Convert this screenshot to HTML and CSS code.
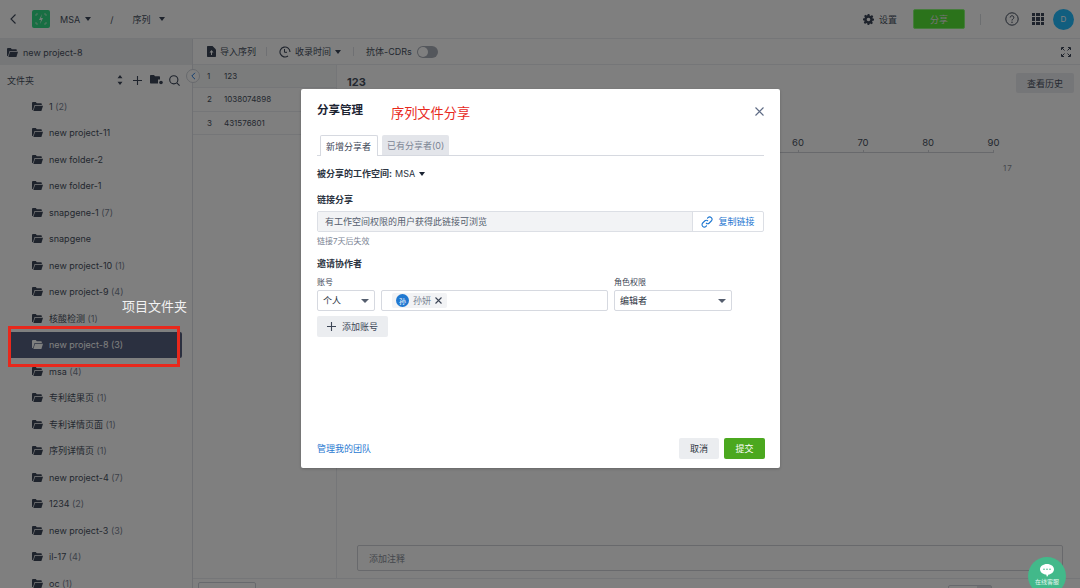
FILE: index.html
```html
<!DOCTYPE html>
<html>
<head>
    <title>序列文件分享</title>
    <link rel="stylesheet" href="styles.css">
</head>
<body>
    <svg class="defs" width="0" height="0">
        <symbol id="folder" viewBox="0 0 11 9">
            <path d="M0 1.2C0 .5.5 0 1.2 0h2.6l1 1.2h4c.6 0 1 .4 1 1V3H2.6L1 8.3 0 7.8z"/>
            <path d="M3 3.8h8L9.4 9H1.4z"/>
        </symbol>
    </svg>

    <header class="topbar">
        <svg class="back" width="6" height="10" viewBox="0 0 6 10"><path d="M5.500.5 1 5l4.500 4.500" fill="none" stroke="#3c4658" stroke-width="1.100"/></svg>
        <div class="logo">
            <svg width="12" height="12" viewBox="0 0 12 12"><path d="M1 3V1h2M9 1h2v2M1 9v2h2M9 11h2V9" fill="none" stroke="#a8f0c8" stroke-width="1"/><path d="M7 1 4 7h2l-1 4 3-6H6z" fill="#e5fff0"/></svg>
        </div>
        <span class="crumb crumb-msa">MSA</span><i class="caret"></i>
        <span class="crumb crumb-sep">/</span>
        <span class="crumb">序列</span><i class="caret caret-seq"></i>
        <div class="top-right">
            <svg width="11" height="11" viewBox="0 0 12 12"><path d="M5 0h2l.3 1.600 1.100.5 1.400-.9 1.400 1.400-.9 1.400.5 1.100L12 5v2l-1.600.3-.5 1.100.9 1.400-1.400 1.400-1.400-.9-1.100.5L7 12H5l-.3-1.600-1.100-.5-1.400.9-1.400-1.400.9-1.400-.5-1.100L0 7V5l1.600-.3.500-1.100-.9-1.400 1.400-1.400 1.400.9 1.100-.5zM6 4a2 2 0 1 0 0 4 2 2 0 0 0 0-4z" fill="#3c4658" fill-rule="evenodd"/></svg>
            <span class="settings-label">设置</span>
            <button class="share-btn">分享</button>
            <span class="top-divider"></span>
            <svg class="help" width="14" height="14" viewBox="0 0 14 14"><circle cx="7" cy="7" r="6.200" fill="none" stroke="#3c4658" stroke-width="1"/><path d="M5.200 5.500c0-2.300 3.600-2.300 3.600 0 0 1.500-1.800 1.500-1.800 3" fill="none" stroke="#3c4658"/><circle cx="7" cy="10.300" r=".7" fill="#3c4658"/></svg>
            <div class="apps"><i></i><i></i><i></i><i></i><i></i><i></i><i></i><i></i><i></i></div>
            <div class="avatar">D</div>
        </div>
    </header>

    <div class="main">
        <aside class="sidebar">
            <div class="project-row">
                <svg class="folder-icon"><use href="#folder"/></svg>
                <span>new project-8</span>
            </div>
            <div class="folder-head">
                <span class="folder-title">文件夹</span>
                <div class="folder-tools">
                    <svg width="6" height="10" viewBox="0 0 6 10"><path d="M3 0 5.500 3.200H.5zM3 10 .5 6.800h5z" fill="#3c4658"/></svg>
                    <svg class="tool-plus" width="9" height="9" viewBox="0 0 9 9"><path d="M4.500 0v9M0 4.500h9" stroke="#3c4658" stroke-width="1.100"/></svg>
                    <svg class="tool-folder" width="13" height="10" viewBox="0 0 13 10"><path d="M0 1c0-.6.4-1 1-1h3l1 1.300h4c.6 0 1 .4 1 1V4.500H8v4H1c-.6 0-1-.4-1-1z" fill="#3c4658"/><circle cx="11" cy="7.500" r="1.800" fill="#3c4658"/></svg>
                    <svg class="tool-search" width="11" height="11" viewBox="0 0 11 11"><circle cx="4.800" cy="4.800" r="4.100" fill="none" stroke="#3c4658" stroke-width="1.100"/><path d="m7.800 7.800 2.800 2.800" stroke="#3c4658" stroke-width="1.100"/></svg>
                </div>
            </div>
            <ul class="tree">
                <li><svg class="folder-icon"><use href="#folder"/></svg>1 <em>(2)</em></li>
                <li><svg class="folder-icon"><use href="#folder"/></svg>new project-11</li>
                <li><svg class="folder-icon"><use href="#folder"/></svg>new folder-2</li>
                <li><svg class="folder-icon"><use href="#folder"/></svg>new folder-1</li>
                <li><svg class="folder-icon"><use href="#folder"/></svg>snapgene-1 <em>(7)</em></li>
                <li><svg class="folder-icon"><use href="#folder"/></svg>snapgene</li>
                <li><svg class="folder-icon"><use href="#folder"/></svg>new project-10 <em>(1)</em></li>
                <li><svg class="folder-icon"><use href="#folder"/></svg>new project-9 <em>(4)</em></li>
                <li><svg class="folder-icon"><use href="#folder"/></svg>核酸检测 <em>(1)</em></li>
                <li class="active"><svg class="folder-icon"><use href="#folder"/></svg>new project-8 <em>(3)</em></li>
                <li><svg class="folder-icon"><use href="#folder"/></svg>msa <em>(4)</em></li>
                <li><svg class="folder-icon"><use href="#folder"/></svg>专利结果页 <em>(1)</em></li>
                <li><svg class="folder-icon"><use href="#folder"/></svg>专利详情页面 <em>(1)</em></li>
                <li><svg class="folder-icon"><use href="#folder"/></svg>序列详情页 <em>(1)</em></li>
                <li><svg class="folder-icon"><use href="#folder"/></svg>new project-4 <em>(7)</em></li>
                <li><svg class="folder-icon"><use href="#folder"/></svg>1234 <em>(2)</em></li>
                <li><svg class="folder-icon"><use href="#folder"/></svg>new project-3 <em>(3)</em></li>
                <li><svg class="folder-icon"><use href="#folder"/></svg>il-17 <em>(4)</em></li>
                <li><svg class="folder-icon"><use href="#folder"/></svg>oc <em>(1)</em></li>
            </ul>
        </aside>

        <section class="content">
            <div class="toolbar">
                <svg width="9" height="11" viewBox="0 0 9 11"><path d="M0 1c0-.6.4-1 1-1h4.500L9 3.500V10c0 .6-.4 1-1 1H1c-.6 0-1-.4-1-1z" fill="#3c4658"/><path d="M4.500 4 2.500 6.500H4V9h1V6.500h1.500z" fill="#fff"/></svg>
                <span class="tool-label">导入序列</span>
                <span class="tool-sep"></span>
                <svg width="12" height="12" viewBox="0 0 12 12"><path d="M11 6a5 5 0 1 0-2 4" fill="none" stroke="#3c4658" stroke-width="1.100"/><path d="M5.500 3v3.300h2.500" fill="none" stroke="#3c4658"/></svg>
                <span class="tool-label">收录时间</span><i class="caret"></i>
                <span class="tool-sep tool-sep-wide"></span>
                <span class="tool-label tool-cdr">抗体-CDRs</span>
                <span class="switch"><i></i></span>
                <svg class="expand" width="10" height="10" viewBox="0 0 10 10"><path d="M.5 3V.5H3M7 .5h2.500V3M.5 7v2.500H3M7 9.500h2.500V7M1 1l2.500 2.500M9 1 6.500 3.500M1 9l2.500-2.500M9 9 6.500 6.500" fill="none" stroke="#3c4658" stroke-width="1"/></svg>
            </div>
            <div class="panes">
                <div class="seq-list">
                    <span class="collapse-btn"><svg width="5" height="8" viewBox="0 0 5 8"><path d="M4 .8.800 4 4 7.200" fill="none" stroke="#2a80e0" stroke-width="1"/></svg></span>
                    <div class="seq-row seq-selected"><span class="seq-no">1</span>123</div>
                    <div class="seq-row"><span class="seq-no">2</span>1038074898</div>
                    <div class="seq-row"><span class="seq-no">3</span>431576801</div>
                </div>
                <div class="detail">
                    <div class="detail-head">
                        <strong class="detail-title">123</strong>
                        <button class="history-btn">查看历史</button>
                    </div>
                    <div class="ruler">
                        <span>60</span><span>70</span><span>80</span><span>90</span>
                    </div>
                    <div class="ruler-end">17</div>
                    <div class="note-box">添加注释</div>
                </div>
            </div>
            <div class="footer-bar">
                <span class="footer-btn"></span>
                <span class="footer-pager"></span>
            </div>
        </section>
    </div>

    <div class="chat-btn">
        <svg width="14" height="13" viewBox="0 0 14 13"><path d="M7 0c3.900 0 7 2.300 7 5.300s-3.100 5.200-5.400 5.300L7 13l-.8-2.400C3 10.400 0 8.300 0 5.300S3.100 0 7 0z" fill="#fff"/><circle cx="4" cy="5.300" r=".8" fill="#42b98a"/><circle cx="7" cy="5.300" r=".8" fill="#42b98a"/><circle cx="10" cy="5.300" r=".8" fill="#42b98a"/></svg>
        <span>在线客服</span>
    </div>

    <div class="overlay">
        <div class="modal">
            <div class="modal-head">
                <h2>分享管理</h2>
                <span class="note-red">序列文件分享</span>
                <svg class="close" width="9" height="9" viewBox="0 0 9 9"><path d="m.5.500 8 8M8.500.500l-8 8" stroke="#5e6b85" stroke-width="1.100"/></svg>
            </div>
            <div class="tabs">
                <span class="tab tab-on">新增分享者</span>
                <span class="tab">已有分享者(0)</span>
            </div>
            <div class="workspace">被分享的工作空间: <span class="workspace-name">MSA</span><i class="caret caret-dark"></i></div>
            <div class="section-label">链接分享</div>
            <div class="link-row">
                <div class="link-text">有工作空间权限的用户获得此链接可浏览</div>
                <div class="link-copy">
                    <svg width="12" height="12" viewBox="0 0 12 12"><path d="M5 7a2.300 2.300 0 0 0 3.300 0l2-2A2.300 2.300 0 0 0 7 1.700l-.8.8M7 5a2.300 2.300 0 0 0-3.300 0l-2 2A2.300 2.300 0 0 0 5 10.300l.8-.8" fill="none" stroke="#1f78d1" stroke-width="1.100"/></svg>
                    复制链接
                </div>
            </div>
            <div class="link-hint">链接7天后失效</div>
            <div class="section-label invite-label">邀请协作者</div>
            <div class="invite-grid">
                <span class="field-label">账号</span>
                <span></span>
                <span class="field-label">角色权限</span>
                <div class="select select-type">个人<i class="caret"></i></div>
                <div class="select select-user">
                    <span class="chip"><span class="chip-avatar">孙</span>孙妍<svg width="7" height="7" viewBox="0 0 7 7"><path d="m.5.500 6 6M6.500.500l-6 6" stroke="#3d4656" stroke-width="1.100"/></svg></span>
                </div>
                <div class="select select-role">编辑者<i class="caret"></i></div>
            </div>
            <button class="add-btn"><svg width="9" height="9" viewBox="0 0 9 9"><path d="M4.500 0v9M0 4.500h9" stroke="#3d4656" stroke-width="1.100"/></svg>添加账号</button>
            <div class="modal-foot">
                <a class="team-link">管理我的团队</a>
                <div class="foot-btns">
                    <button class="cancel-btn">取消</button>
                    <button class="submit-btn">提交</button>
                </div>
            </div>
        </div>
    </div>

    <div class="mark-box"></div>
    <div class="mark-label">项目文件夹</div>
</body>
</html>
```

FILE: styles.css
```css
* {
    box-sizing: border-box;
}
html, body {
    height: 100%;
}
body {
    margin: 0;
    height: 588px;
    overflow: hidden;
    position: relative;
    display: flex;
    flex-direction: column;
    font-family: Inter, "Noto Sans CJK SC", sans-serif;
    font-size: 9px;
    color: #475060;
    background-color: #fff;
}
button {
    font-family: inherit;
    border: none;
    cursor: pointer;
}
.defs {
    position: absolute;
}
.caret {
    display: inline-block;
    width: 0;
    height: 0;
    border-left: 3.500px solid transparent;
    border-right: 3.500px solid transparent;
    border-top: 4px solid #3c4658;
}

/* top bar */
.topbar {
    height: 39px;
    flex: none;
    display: flex;
    align-items: center;
    padding-left: 10px;
    background-color: #fff;
    border-bottom: 1px solid #ebedf0;
}
.logo {
    width: 18px;
    height: 18px;
    margin-left: 16px;
    border-radius: 2px;
    background-color: #30dc86;
    display: flex;
    align-items: center;
    justify-content: center;
}
.crumb-msa {
    margin-left: 10px;
    margin-right: 5px;
}
.crumb-sep {
    margin-left: 19px;
    margin-right: 19px;
}
.caret-seq {
    margin-left: 9px;
}
.top-right {
    margin-left: auto;
    display: flex;
    align-items: center;
    padding-right: 6px;
}
.settings-label {
    margin-left: 5px;
}
.share-btn {
    width: 52px;
    height: 20px;
    margin-left: 16px;
    border-radius: 2px;
    background-color: #56e636;
    border: 1px solid #8cf87a;
    color: #e8e8e8;
    font-size: 9px;
    padding: 0;
}
.top-divider {
    width: 1px;
    height: 11px;
    margin-left: 15px;
    background-color: #d9dce1;
}
.help {
    margin-left: 24px;
}
.apps {
    width: 12px;
    height: 12px;
    margin-left: 13px;
    display: grid;
    grid-template-columns: repeat(3, 1fr);
    gap: 1px;
}
.apps i {
    background-color: #3c4658;
}
.avatar {
    width: 21px;
    height: 21px;
    margin-left: 9px;
    border-radius: 50%;
    background-color: #22bcff;
    color: #fff;
    font-size: 8px;
    display: flex;
    align-items: center;
    justify-content: center;
}

/* sidebar */
.main {
    flex: 1;
    display: flex;
    min-height: 0;
}
.sidebar {
    width: 193px;
    flex: none;
    border-right: 1px solid #dfe1e6;
    overflow: hidden;
}
.project-row {
    height: 26px;
    padding-left: 7px;
    display: flex;
    align-items: center;
    background-color: #edeef0;
}
.project-row .folder-icon {
    margin-right: 5px;
}
.folder-icon {
    width: 11px;
    height: 9px;
    fill: #3c4658;
    flex: none;
}
.folder-head {
    height: 28px;
    padding: 2px 12px 0 7px;
    display: flex;
    align-items: center;
    justify-content: space-between;
}
.folder-tools {
    display: flex;
    align-items: center;
}
.tool-plus {
    margin-left: 10px;
}
.tool-folder {
    margin-left: 8px;
}
.tool-search {
    margin-left: 6px;
}
.tree {
    list-style: none;
    margin: 0;
    padding: 0;
}
.tree li {
    height: 26.500px;
    padding-left: 32px;
    display: flex;
    align-items: center;
    white-space: pre;
}
.tree li .folder-icon {
    margin-right: 6px;
}
.tree em {
    font-style: normal;
    color: #7b8494;
}
.tree li.active {
    margin-left: 8px;
    margin-right: 10px;
    padding-left: 24px;
    background-color: #566080;
    color: #fff;
    border-radius: 2px;
}
.tree li.active .folder-icon {
    fill: #fff;
}
.tree li.active em {
    color: #fff;
}

/* content */
.content {
    flex: 1;
    min-width: 0;
    display: flex;
    flex-direction: column;
}
.toolbar {
    height: 26px;
    flex: none;
    padding-left: 14px;
    padding-right: 9px;
    display: flex;
    align-items: center;
    border-bottom: 1px solid #ebedf0;
}
.tool-label {
    margin-left: 4px;
    margin-right: 4px;
}
.tool-sep {
    width: 1px;
    height: 9px;
    margin: 0 12px 0 6px;
    background-color: #dfe1e6;
}
.tool-sep-wide {
    margin-left: 12px;
}
.tool-cdr {
    margin-left: 0;
    margin-right: 5px;
}
.switch {
    width: 21px;
    height: 12px;
    border-radius: 6px;
    background-color: #a9aeb8;
    padding: 1px;
    display: flex;
}
.switch i {
    width: 10px;
    height: 10px;
    border-radius: 50%;
    background-color: #fff;
}
.expand {
    margin-left: auto;
}
.panes {
    flex: 1;
    display: flex;
    min-height: 0;
}
.seq-list {
    width: 144px;
    flex: none;
    position: relative;
    border-right: 1px solid #ebedf0;
}
.collapse-btn {
    position: absolute;
    left: -7px;
    top: 4px;
    width: 14px;
    height: 14px;
    border-radius: 50%;
    background-color: #fff;
    border: 1px solid #cfd3da;
    display: flex;
    align-items: center;
    justify-content: center;
    z-index: 1;
}
.seq-row {
    height: 23.300px;
    display: flex;
    align-items: center;
    padding-left: 14px;
    font-size: 8px;
    border-bottom: 1px solid #ebedf0;
}
.seq-selected {
    background-color: #f7f8f9;
}
.seq-no {
    width: 17px;
}
.detail {
    flex: 1;
    min-width: 0;
    display: flex;
    flex-direction: column;
    padding: 8px 6px 7px 10px;
}
.detail-head {
    display: flex;
    justify-content: space-between;
    align-items: flex-start;
}
.detail-title {
    font-size: 11px;
    margin-top: 2px;
}
.history-btn {
    width: 58px;
    height: 20px;
    border-radius: 2px;
    background-color: #ebedf0;
    color: #475060;
    font-size: 9px;
    padding: 0;
}
.ruler {
    margin-top: 44px;
    margin-left: 423px;
    width: 224px;
    height: 16px;
    padding-left: 22px;
    display: flex;
    gap: 53.500px;
    font-size: 9.500px;
    border-bottom: 1px solid #d0d3d8;
}
.ruler span {
    position: relative;
}
.ruler span::after {
    content: "";
    position: absolute;
    left: 50%;
    bottom: -1px;
    width: 1px;
    height: 3px;
    background-color: #d0d3d8;
}
.ruler-end {
    margin-top: 10px;
    margin-left: 656px;
    color: #8a8f99;
    font-size: 8px;
    letter-spacing: 1px;
}
.note-box {
    margin-top: auto;
    height: 26px;
    width: 706px;
    margin-left: 10px;
    border: 1px solid #d0d3d8;
    border-radius: 2px;
    padding-left: 11px;
    display: flex;
    align-items: center;
    color: #8a8f99;
}
.footer-bar {
    height: 10px;
    flex: none;
    border-top: 1px solid #ebedf0;
    position: relative;
}
.footer-btn {
    position: absolute;
    left: 5px;
    top: 3px;
    width: 58px;
    height: 12px;
    border: 1px solid #cfd3da;
    border-radius: 2px;
}
.footer-pager {
    position: absolute;
    left: 755px;
    top: 6px;
    width: 44px;
    height: 12px;
    border: 1px solid #cfd3da;
    border-radius: 2px;
    background: linear-gradient(to right, transparent 66%, #dfe1e6 66%);
}

/* chat button sits above the overlay */
.chat-btn {
    position: absolute;
    left: 1028px;
    top: 557px;
    width: 38px;
    height: 38px;
    border-radius: 50%;
    background-color: #42b98a;
    color: #e6f7ef;
    font-size: 6px;
    display: flex;
    flex-direction: column;
    align-items: center;
    padding-top: 7px;
    z-index: 3;
}
.chat-btn span {
    margin-top: 1px;
    line-height: 8px;
}

/* modal */
.overlay {
    position: absolute;
    inset: 0;
    background-color: rgba(0, 0, 0, 0.5);
    display: flex;
    justify-content: center;
    align-items: flex-start;
    padding-top: 89px;
    padding-left: 1px;
    z-index: 2;
}
.modal {
    width: 479px;
    height: 379px;
    background-color: #fff;
    border-radius: 2px;
    padding: 0 16px 0 16px;
    display: flex;
    flex-direction: column;
    color: #2c3442;
    box-shadow: 0 1px 3px rgba(0,0,0,0.2);
}
.modal-head {
    height: 46px;
    flex: none;
    display: flex;
    align-items: center;
    position: relative;
}
.modal-head h2 {
    margin: 0;
    font-size: 11.500px;
    font-weight: bold;
    color: #1c2433;
    position: relative;
    top: -3px;
}
.note-red {
    margin-left: 28px;
    font-size: 13.200px;
    color: #e8281c;
}
.close {
    position: absolute;
    right: 0;
    top: 18px;
}
.tabs {
    display: flex;
    height: 21px;
    flex: none;
    padding-left: 3px;
    gap: 4px;
    border-bottom: 1px solid #d6d9e0;
}
.tab {
    height: 20px;
    padding: 0 5px;
    display: flex;
    align-items: center;
    background-color: #e3e5ea;
    color: #7b8494;
    border-radius: 2px 2px 0 0;
}
.tab-on {
    height: 21px;
    width: 58px;
    padding: 0 5px;
    background-color: #fff;
    color: #3d4656;
    border: 1px solid #d6d9e0;
    border-bottom: none;
}
.workspace {
    margin-top: 12px;
    font-weight: bold;
    display: flex;
    align-items: center;
    line-height: 12px;
}
.workspace-name {
    margin-left: 3px;
    margin-right: 4px;
    font-weight: normal;
}
.caret-dark {
    border-top-color: #1c2433;
}
.section-label {
    margin-top: 14px;
    font-weight: bold;
    line-height: 12px;
}
.link-row {
    margin-top: 5px;
    height: 21px;
    flex: none;
    display: flex;
    border: 1px solid #dcdfe5;
    border-radius: 2px;
    overflow: hidden;
}
.link-text {
    flex: 1;
    padding-left: 7px;
    display: flex;
    align-items: center;
    background-color: #f2f3f5;
    color: #555e6e;
    border-right: 1px solid #dcdfe5;
}
.link-copy {
    width: 70px;
    flex: none;
    display: flex;
    align-items: center;
    justify-content: center;
    gap: 5px;
    color: #1f78d1;
}
.link-hint {
    margin-top: 4px;
    font-size: 8px;
    color: #7b8494;
    line-height: 10px;
}
.invite-label {
    margin-top: 12px;
}
.invite-grid {
    margin-top: 7px;
    display: grid;
    grid-template-columns: 58px 227px 118px;
    column-gap: 6px;
    row-gap: 3px;
    align-items: center;
}
.field-label {
    font-size: 8px;
    color: #3d4656;
    line-height: 10px;
}
.select {
    height: 21px;
    border: 1px solid #d6d9e0;
    border-radius: 2px;
    display: flex;
    align-items: center;
    justify-content: space-between;
    padding: 0 5px;
}
.select .caret {
    border-top-color: #555e6e;
    border-left-width: 4px;
    border-right-width: 4px;
}
.select-user {
    justify-content: flex-start;
    padding-left: 10px;
}
.chip {
    height: 15px;
    padding-right: 5px;
    display: flex;
    align-items: center;
    gap: 4px;
    background-color: #f2f3f5;
    border-radius: 2px;
    color: #7b8494;
}
.chip-avatar {
    width: 13px;
    height: 13px;
    margin-left: 4px;
    border-radius: 50%;
    background-color: #1f78d1;
    color: #fff;
    font-size: 7px;
    display: flex;
    align-items: center;
    justify-content: center;
}
.add-btn {
    width: 71px;
    height: 21px;
    margin-top: 5px;
    flex: none;
    border-radius: 2px;
    background-color: #ebedf0;
    color: #3d4656;
    font-size: 9px;
    display: flex;
    align-items: center;
    justify-content: center;
    gap: 6px;
    padding: 0;
}
.modal-foot {
    margin-top: auto;
    height: 30px;
    flex: none;
    display: flex;
    align-items: flex-start;
    justify-content: space-between;
    margin-right: -1px;
}
.team-link {
    color: #1f78d1;
    line-height: 21px;
}
.foot-btns {
    display: flex;
    gap: 5px;
}
.cancel-btn, .submit-btn {
    width: 40px;
    height: 21px;
    border-radius: 2px;
    font-size: 9px;
    padding: 0;
}
.cancel-btn {
    background-color: #ebedf0;
    color: #2c3442;
}
.submit-btn {
    width: 41px;
    background-color: #4ba81f;
    color: #fff;
}

/* annotations over the screenshot */
.mark-box {
    position: absolute;
    left: 8px;
    top: 326px;
    width: 172px;
    height: 41px;
    border: 3px solid #e8281c;
    z-index: 3;
}
.mark-label {
    position: absolute;
    left: 122px;
    top: 298px;
    color: #f2f2f2;
    font-size: 13px;
    line-height: 16px;
    z-index: 3;
}
```
